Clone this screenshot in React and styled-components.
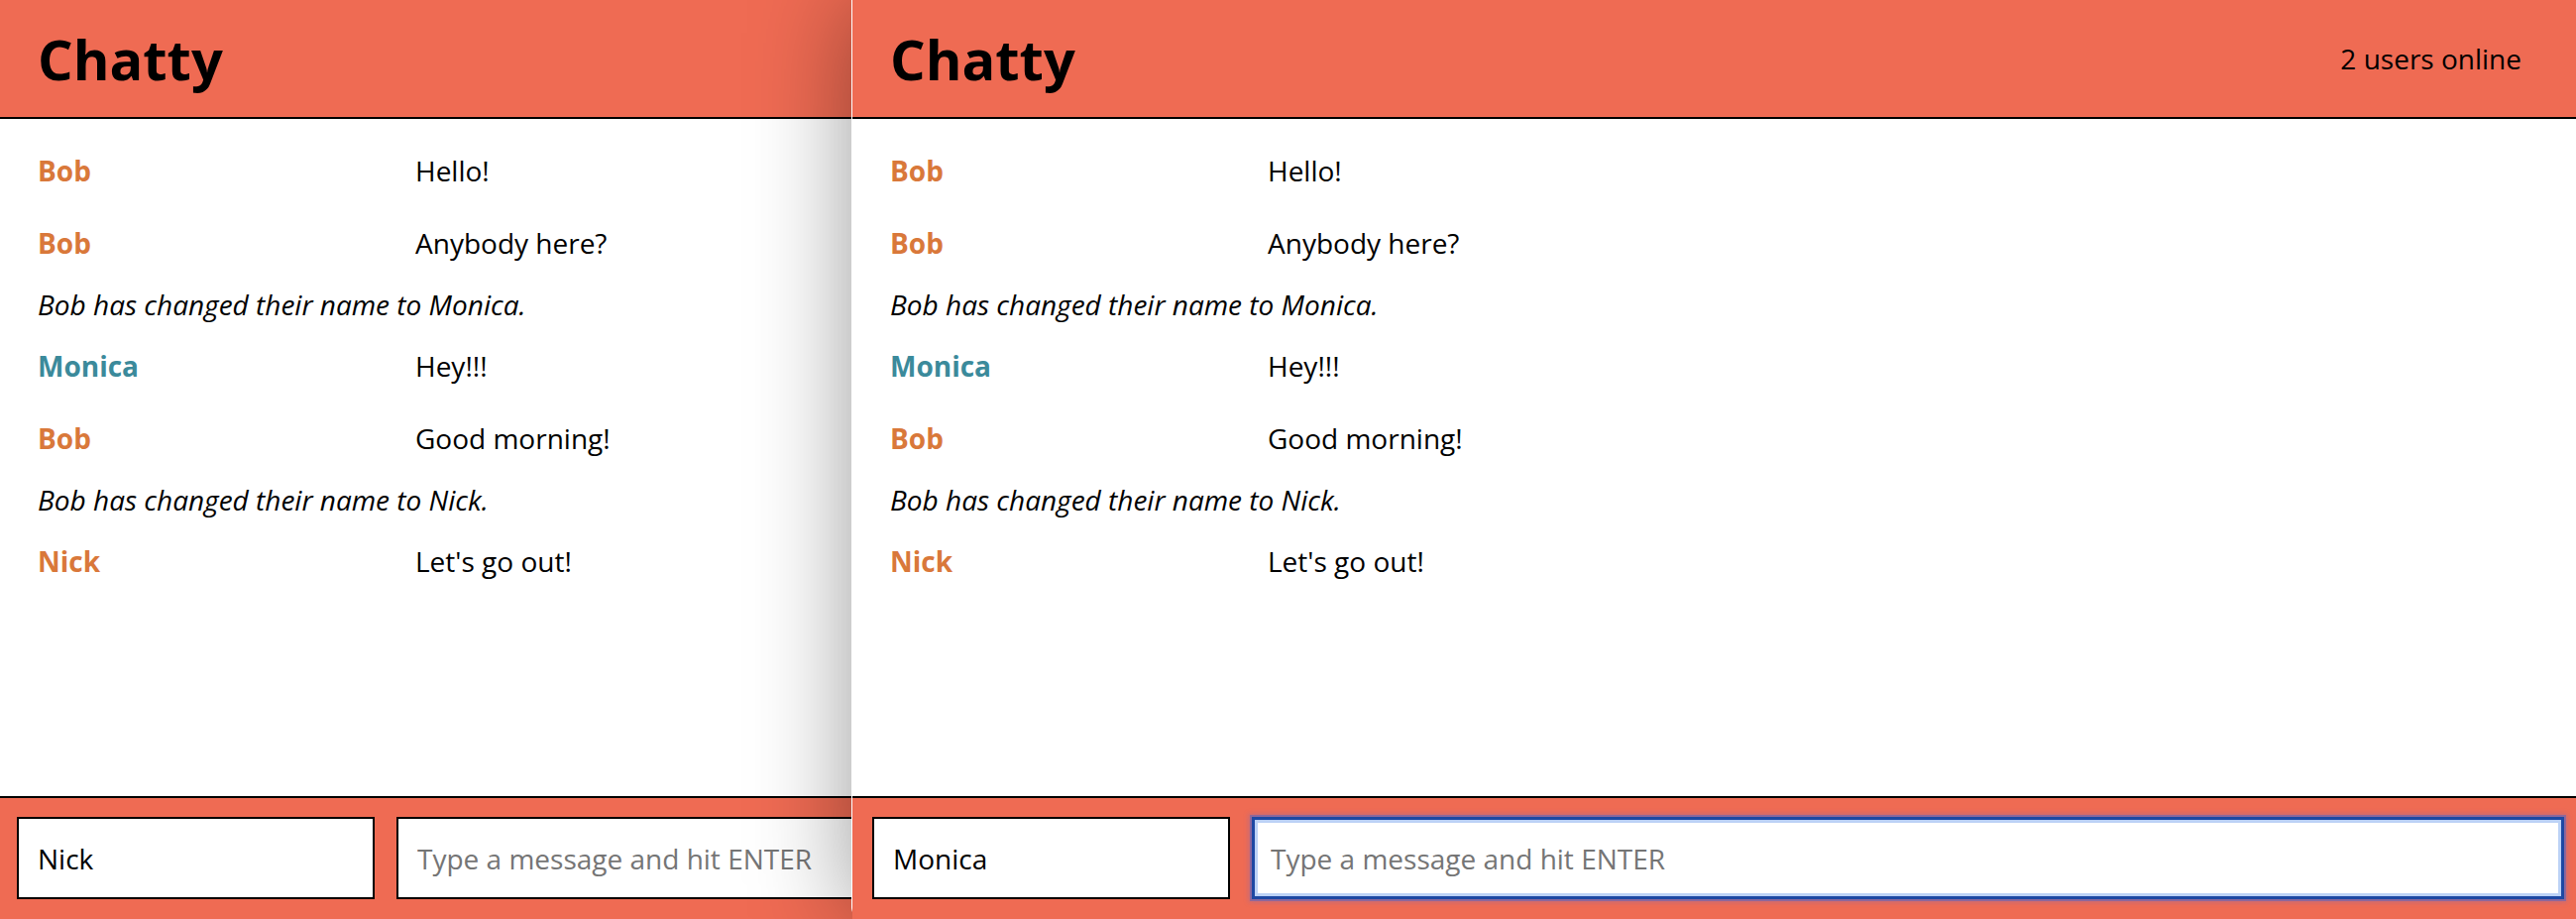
import React from "react";
import styled, { createGlobalStyle, css } from "styled-components";

const GlobalStyle = createGlobalStyle`
  html, body {
    margin: 0;
    padding: 0;
    background: #d8d8d8;
    overflow: hidden;
  }
  * {
    box-sizing: border-box;
  }
`;

const messages = [
  { type: "message", username: "Bob", content: "Hello!" },
  { type: "message", username: "Bob", content: "Anybody here?" },
  { type: "notification", content: "Bob has changed their name to Monica." },
  { type: "message", username: "Monica", content: "Hey!!!" },
  { type: "message", username: "Bob", content: "Good morning!" },
  { type: "notification", content: "Bob has changed their name to Nick." },
  { type: "message", username: "Nick", content: "Let's go out!" },
];

const userColors = {
  Bob: "#d9783a",
  Monica: "#3b8a9b",
  Nick: "#d9783a",
};

function ChatWindow({ currentUser, focused, showCount, barInset }) {
  return (
    <>
      <NavBar>
        <Brand>Chatty</Brand>
        {showCount && <UserCount>2 users online</UserCount>}
      </NavBar>
      <MessageList>
        {messages.map((m, i) =>
          m.type === "message" ? (
            <MessageRow key={i}>
              <Username color={userColors[m.username]}>{m.username}</Username>
              <Content>{m.content}</Content>
            </MessageRow>
          ) : (
            <Notification key={i}>{m.content}</Notification>
          )
        )}
      </MessageList>
      <ChatBar inset={barInset}>
        <NameInput defaultValue={currentUser} />
        <MessageInput
          placeholder="Type a message and hit ENTER"
          focused={focused ? 1 : 0}
        />
      </ChatBar>
    </>
  );
}

export default function App() {
  return (
    <Desktop>
      <GlobalStyle />
      <Window left={0} width={1240}>
        <ChatWindow currentUser="Nick" barInset={17} />
      </Window>
      <Window left={859} width={1740} front>
        <ChatWindow currentUser="Monica" focused showCount barInset={20} />
      </Window>
    </Desktop>
  );
}

const Desktop = styled.div`
  position: relative;
  width: 100vw;
  height: 927px;
  overflow: hidden;
  font-family: "Open Sans", "DejaVu Sans", sans-serif;
  font-size: 28px;
  color: #000;
`;

const Window = styled.div`
  position: absolute;
  top: 0;
  left: ${(p) => p.left}px;
  width: ${(p) => p.width}px;
  height: 927px;
  display: flex;
  flex-direction: column;
  background: #ffffff;
  overflow: hidden;
  ${(p) =>
    p.front &&
    css`
      z-index: 2;
      border-bottom-left-radius: 12px;
      box-shadow: 0 0 100px rgba(0, 0, 0, 0.4);
      border-left: 1px solid rgba(255, 255, 255, 0.3);
      overflow: visible;
      clip-path: inset(-200px 0 0 -200px round 0 0 0 12px);
    `}
`;

const NavBar = styled.nav`
  flex: 0 0 auto;
  height: 120px;
  display: flex;
  align-items: center;
  justify-content: space-between;
  padding: 0 55px 0 38px;
  background: #ef6b53;
  border-bottom: 2px solid #000;
`;

const Brand = styled.h1`
  margin: 0;
  font-size: 56px;
  font-weight: 700;
  line-height: 1;
`;

const UserCount = styled.span`
  font-size: 28px;
  line-height: 1;
`;

const MessageList = styled.main`
  flex: 1;
  padding-top: 16px;
  overflow: hidden;
`;

const MessageRow = styled.div`
  display: flex;
  padding: 17px 38px;
  line-height: 39px;
`;

const Username = styled.span`
  flex: 0 0 381px;
  font-weight: 700;
  color: ${(p) => p.color};
`;

const Content = styled.span`
  flex: 1;
`;

const Notification = styled.div`
  padding: 6px 38px;
  line-height: 39px;
  font-style: italic;
`;

const ChatBar = styled.footer`
  flex: 0 0 124px;
  display: flex;
  gap: 22px;
  padding: 19px 12px 20px ${(p) => p.inset}px;
  background: #ef6b53;
  border-top: 2px solid #000;
`;

const inputBase = css`
  min-width: 0;
  height: 83px;
  border: 2px solid #000;
  background: #fff;
  padding: 0 19px;
  font-family: "Open Sans", "DejaVu Sans", sans-serif;
  font-size: 28px;
  color: #000;
  outline: none;
  border-radius: 0;

  &::placeholder {
    color: #757575;
  }
`;

const NameInput = styled.input`
  ${inputBase};
  flex: 0 0 361px;
  width: 361px;
`;

const MessageInput = styled.input`
  ${inputBase};
  flex: 1 1 0;
  width: 0;
  ${(p) =>
    p.focused &&
    css`
      border: 3px solid #1d48a3;
      padding: 0 16px;
      box-shadow: inset 0 0 0 3px #bcd2f6, 0 0 0 2px rgba(90, 100, 190, 0.55),
        0 0 5px 3px rgba(110, 110, 200, 0.35);
    `}
`;
